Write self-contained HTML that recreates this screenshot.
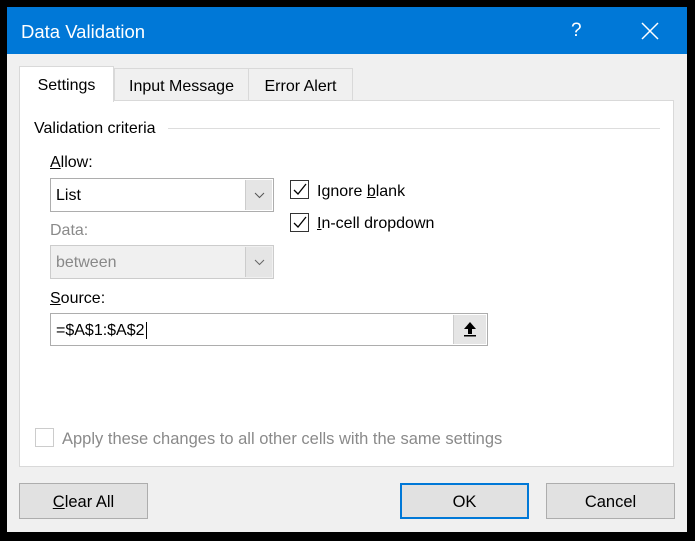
<!DOCTYPE html>
<html><head><style>
body{margin:0;width:695px;height:541px;background:#000;position:relative;overflow:hidden;font-family:"Liberation Sans",sans-serif;font-size:16px;color:#000}
.a{position:absolute}
.dlg{left:7px;top:7px;width:680px;height:525px;background:#f0f0f0}
.title{left:7px;top:7px;width:680px;height:47px;background:#0078d7;color:#fff}
.tab{top:68px;height:32px;border:1px solid #d9d9d9;border-bottom:none;background:#f0f0f0;text-align:center;line-height:36px;box-sizing:border-box}
.panel{left:19px;top:100px;width:655px;height:367px;background:#fff;border:1px solid #d9d9d9;box-sizing:border-box}
.combo{height:34px;border:1px solid #adadad;box-sizing:border-box;background:#fff;line-height:34px;padding-left:5px}
.cb{width:19px;height:19px;border:1px solid #333;box-sizing:border-box;background:#fff}
.btn{top:483px;height:36px;border:1px solid #adadad;background:#e1e1e1;box-sizing:border-box;text-align:center;line-height:36px;font-size:16.5px}
u{text-decoration:underline}
</style></head><body>
<div class="a dlg"></div>
<div class="a title"><span class="a" style="left:14px;top:14px;font-size:18.5px">Data Validation</span>
<span class="a" style="left:564px;top:13px;font-size:19px">?</span>
<svg class="a" style="left:634px;top:15px" width="18" height="18"><path d="M1 1L17 17M17 1L1 17" stroke="#fff" stroke-width="1.5"/></svg></div>
<div class="a tab" style="left:114px;width:135px">Input Message</div>
<div class="a tab" style="left:248px;width:105px">Error Alert</div>
<div class="a panel"></div>
<div class="a tab" style="left:19px;top:66px;height:36px;width:95px;background:#fff;line-height:38px;border-bottom:none">Settings</div>
<span class="a" style="left:34px;top:120px">Validation criteria</span>
<div class="a" style="left:168px;top:128px;width:492px;height:1px;background:#ddd"></div>
<span class="a" style="left:50px;top:154px"><u>A</u>llow:</span>
<div class="a combo" style="left:50px;top:178px;width:224px">List<div class="a" style="right:1px;top:1px;width:26px;height:30px;background:#e5e5e5;border-left:1px solid #ccc"><svg class="a" style="left:8px;top:12px" width="11" height="7"><path d="M1 1L5.5 5.5L10 1" stroke="#555" fill="none"/></svg></div></div>
<span class="a" style="left:50px;top:222px;color:#8a8a8a">Data:</span>
<div class="a combo" style="left:50px;top:245px;width:224px;background:#f0f0f0;border-color:#ccc;color:#888">between<div class="a" style="right:1px;top:1px;width:26px;height:30px;background:#e5e5e5;border-left:1px solid #ccc"><svg class="a" style="left:8px;top:12px" width="11" height="7"><path d="M1 1L5.5 5.5L10 1" stroke="#666" fill="none"/></svg></div></div>
<div class="a cb" style="left:290px;top:180px"><svg width="17" height="17"><path d="M3 9L7 13L15 3" stroke="#000" stroke-width="1.3" fill="none"/></svg></div>
<span class="a" style="left:317px;top:183px">Ignore <u>b</u>lank</span>
<div class="a cb" style="left:290px;top:213px"><svg width="17" height="17"><path d="M3 9L7 13L15 3" stroke="#000" stroke-width="1.3" fill="none"/></svg></div>
<span class="a" style="left:317px;top:215px"><u>I</u>n-cell dropdown</span>
<span class="a" style="left:50px;top:290px"><u>S</u>ource:</span>
<div class="a combo" style="left:50px;top:313px;width:438px;height:33px;line-height:33px">=$A$1:$A$2<span style="border-left:1px solid #000;margin-left:1px"></span>
<div class="a" style="right:1px;top:1px;width:32px;height:29px;background:#e5e5e5;border-left:1px solid #ccc"><svg class="a" style="left:9px;top:6px" width="14" height="16"><path d="M7 1L1 8H5V13H9V8H13Z" fill="#000"/><rect x="1" y="14" width="12" height="1.5"/></svg></div></div>
<div class="a" style="left:35px;top:428px;width:19px;height:19px;border:1px solid #ccc;box-sizing:border-box;background:#fff"></div>
<span class="a" style="left:62px;top:430px;color:#8a8a8a;font-size:16.5px">Apply these changes to all other cells with the same settings</span>
<div class="a btn" style="left:19px;width:129px"><u>C</u>lear All</div>
<div class="a btn" style="left:400px;width:129px;border:2px solid #0078d7;line-height:34px">OK</div>
<div class="a btn" style="left:546px;width:129px">Cancel</div>
</body></html>
